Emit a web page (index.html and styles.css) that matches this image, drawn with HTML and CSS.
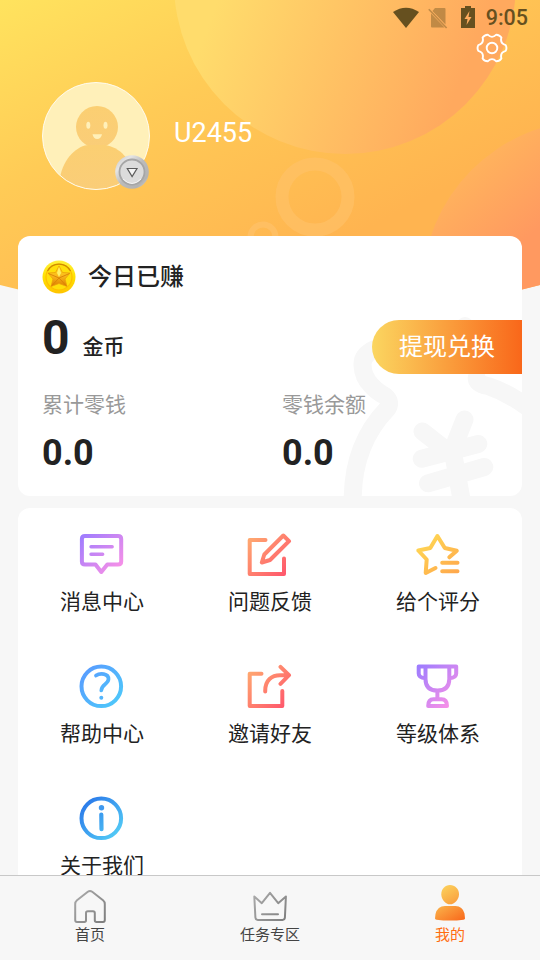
FILE: index.html
```
<!DOCTYPE html>
<html lang="zh-CN">
<head>
<meta charset="utf-8">
<title>我的</title>
<link rel="stylesheet" href="styles.css">
</head>
<body>
<div class="app">
  <svg class="backdrop" viewBox="0 0 540 320" aria-hidden="true">
    <defs>
      <linearGradient id="sky" gradientUnits="userSpaceOnUse" x1="0" y1="0" x2="170" y2="330"><stop offset="0" stop-color="#ffe35e"/><stop offset=".45" stop-color="#ffcb56"/><stop offset="1" stop-color="#ffb450"/></linearGradient>
      <linearGradient id="ball" gradientUnits="userSpaceOnUse" x1="210" y1="20" x2="450" y2="110"><stop offset="0" stop-color="#ffdc6c"/><stop offset=".5" stop-color="#ffc364"/><stop offset="1" stop-color="#ffa95e"/></linearGradient>
      <linearGradient id="ball2" gradientUnits="userSpaceOnUse" x1="465" y1="170" x2="525" y2="240"><stop offset="0" stop-color="#ffb35d"/><stop offset="1" stop-color="#ff9960"/></linearGradient>
      <clipPath id="hill"><path d="M0 0H540V285Q270 355 0 285Z"/></clipPath>
    </defs>
    <g clip-path="url(#hill)">
      <rect width="540" height="320" fill="url(#sky)"/>
      <circle cx="345" cy="-17" r="171" fill="url(#ball)"/>
      <circle cx="592" cy="290" r="170" fill="url(#ball2)"/>
      <circle cx="315" cy="197" r="33" fill="none" stroke="#ffc269" stroke-opacity=".65" stroke-width="13"/>
      <circle cx="263" cy="237" r="12.500" fill="none" stroke="#ffc269" stroke-opacity=".7" stroke-width="6"/>
    </g>
  </svg>

  <div class="status">
    <svg class="wifi" viewBox="0 0 26 22"><path d="M0 5Q13-3.500 26 5L13 21Z"/></svg>
    <svg class="sim" viewBox="0 0 20 22"><path d="M7 1H16.500Q17.500 1 17.500 2V17.500L4.500 4ZM3 6.500L16.500 20.500H4Q3 20.500 3 19.500Z"/><path d="M.8 2.200L18.600 21" fill="none" stroke="#66501f" stroke-width="1.600"/></svg>
    <svg class="battery" viewBox="0 0 14 22"><path fill-rule="evenodd" d="M4 0H10V2H14V22H0V2H4ZM8.500 5L3.500 13H6.500L5.500 19L10.500 11H7.500Z"/></svg>
    <span class="time">9:05</span>
  </div>

  <header class="profile">
    <svg class="gear" viewBox="-16 -16 32 32"><path d="M13.700-2.900Q15.200 0 13.700 2.900Q7.800 4.500 9.400 10.400Q7.600 13.200 4.300 13.300Q0 9-4.300 13.300Q-7.600 13.200-9.400 10.400Q-7.800 4.500-13.700 2.900Q-15.200 0-13.700-2.900Q-7.800-4.500-9.400-10.400Q-7.600-13.200-4.300-13.300Q0-9 4.300-13.300Q7.600-13.200 9.400-10.400Q7.800-4.500 13.700-2.900Z"/><circle r="5.300"/></svg>
    <div class="avatar">
      <svg viewBox="0 0 108 108">
        <defs><clipPath id="face"><circle cx="54" cy="54" r="53.500"/></clipPath>
        <linearGradient id="skin" x1="0" y1="0" x2="0" y2="1"><stop offset="0" stop-color="#fbcf72"/><stop offset="1" stop-color="#facd78"/></linearGradient></defs>
        <circle cx="54" cy="54" r="53.500" fill="#fff0b9"/>
        <g clip-path="url(#face)" fill="url(#skin)"><circle cx="55" cy="45" r="21"/><path d="M18 96C21 76 36 63 47 63H63C77 65 90 77 92 96V108H18Z"/></g>
        <g fill="#fff0b9"><ellipse cx="46.300" cy="43.300" rx="2" ry="3.500"/><ellipse cx="63.500" cy="43.300" rx="2" ry="3.500"/><path d="M50.500 52.300H60Q59 57 55.200 57T50.500 52.300Z"/></g>
        <circle cx="54" cy="54" r="53.500" fill="none" stroke="#fffbed"/>
      </svg>
      <svg class="medal" viewBox="0 0 34 34">
        <defs><linearGradient id="silver" x1="0" y1="0" x2="1" y2="1"><stop offset="0" stop-color="#c2c2c2"/><stop offset=".25" stop-color="#e5e5e5"/><stop offset=".5" stop-color="#bbb"/><stop offset=".8" stop-color="#b3b3b3"/><stop offset="1" stop-color="#ddd"/></linearGradient></defs>
        <circle cx="17" cy="17" r="16.800" fill="url(#silver)"/><circle cx="17" cy="17" r="12.500" fill="#dcdcdc" stroke="#a6a6a6" stroke-width="1.800"/><path d="M8 24Q17 33 26 24" fill="none" stroke="#f5f5f5" stroke-width="1"/>
        <path d="M12.300 13.500H22L17.100 21.500Z" fill="#f4f4f4" stroke="#5b5b5b" stroke-width="1.200"/>
      </svg>
    </div>
    <h1 class="name">U2455</h1>
  </header>

  <section class="card wallet">
    <svg class="bag" viewBox="0 0 180 180" aria-hidden="true"><path d="M33 33Q20 39 20.500 49Q21 61 29 69Q34 75 43 80Q50 86 45 93C23 116 10.700 145 10.700 184M134.700 62Q135 68 146 70Q167 77 188 93M123 10V20M80.500 115.500L108 137M122.500 103.500L110.500 134L120 186M79.700 142.700L136.300 128M86 167.300L142.300 151"/></svg>
    <div class="wallet-title">
      <svg class="coin" viewBox="0 0 34 34">
        <defs><linearGradient id="gold" x1="0" y1="0" x2="0" y2="1"><stop offset="0" stop-color="#fff13c"/><stop offset=".5" stop-color="#ffe000"/><stop offset="1" stop-color="#ffc400"/></linearGradient><linearGradient id="star" x1="0" y1="0" x2="0" y2="1"><stop offset="0" stop-color="#ffe31c"/><stop offset=".5" stop-color="#f9b61b"/><stop offset="1" stop-color="#dc7d00"/></linearGradient></defs>
        <circle cx="17" cy="17" r="16.500" fill="url(#gold)"/><circle cx="17" cy="17" r="13" fill="#ffdf0a" stroke="#ffbd00" stroke-width="1.200"/><path d="M5.500 11A13 13 0 0 1 28.500 11" fill="none" stroke="#cf8c00" stroke-width="1.200"/>
        <path d="M17 6L20.500 12.500L28 13L23 19L25 26.500L17 23.500L9 26.500L11 19L6 13L13.500 12.500Z" fill="url(#star)" stroke="#eda00a" stroke-width=".8" stroke-linejoin="round"/><path d="M6.500 13.500L17 18L27.500 13.500M17 18L9.500 26M17 18L24.500 26" fill="none" stroke="#d98107" stroke-width=".9"/><path d="M17 7L19 13L17 17L15 13Z" fill="#fff06a"/>
      </svg>
      <h2>今日已赚</h2>
    </div>
    <div class="today"><span class="amount">0</span><span class="unit">金币</span><a class="exchange">提现兑换</a></div>
    <dl class="totals">
      <div><dt>累计零钱</dt><dd>0.0</dd></div>
      <div><dt>零钱余额</dt><dd>0.0</dd></div>
    </dl>
  </section>

  <section class="card menu">
    <svg class="paints" width="0" height="0" aria-hidden="true"><defs>
      <linearGradient id="violet" gradientUnits="userSpaceOnUse" x1="3" y1="3" x2="40" y2="42"><stop offset="0" stop-color="#9c7cff"/><stop offset="1" stop-color="#fb91e6"/></linearGradient>
      <linearGradient id="coral" gradientUnits="userSpaceOnUse" x1="3" y1="7" x2="40" y2="43"><stop offset="0" stop-color="#ffa970"/><stop offset="1" stop-color="#ff576c"/></linearGradient>
      <linearGradient id="amber" gradientUnits="userSpaceOnUse" x1="8" y1="3" x2="40" y2="43"><stop offset="0" stop-color="#ffdb54"/><stop offset="1" stop-color="#ffa94c"/></linearGradient>
      <linearGradient id="azure" gradientUnits="userSpaceOnUse" x1="5" y1="5" x2="42" y2="42"><stop offset="0" stop-color="#599bff"/><stop offset="1" stop-color="#4dcafa"/></linearGradient>
      <linearGradient id="ocean" gradientUnits="userSpaceOnUse" x1="8" y1="8" x2="40" y2="40"><stop offset="0" stop-color="#2c7cea"/><stop offset="1" stop-color="#53cbf6"/></linearGradient>
    </defs></svg>
    <a class="item"><svg viewBox="0 0 48 48" stroke="url(#violet)"><path d="M7 5H40Q43.200 5 43.200 8V30.500Q43.200 33.500 40 33.500H29.300L23.300 41L17.500 33.500H7Q3.900 33.500 3.900 30.500V8Q3.900 5 7 5Z"/><path d="M13 15.700H34.200M13 23.300H24.700" stroke-width="3.400"/></svg><span>消息中心</span></a>
    <a class="item"><svg viewBox="0 0 48 48" stroke="url(#coral)"><path d="M19.500 9H3.700V43H38V27.500M15.800 31.500L18.300 23.500L37.300 4.500L43 10.200L24 29Z"/></svg><span>问题反馈</span></a>
    <a class="item"><svg viewBox="0 0 48 48" stroke="url(#amber)"><path d="M35.300 26.300L42.800 19.700L30.800 17L23.400 5L16.300 17L4.300 19.500L12.700 28.500L11.700 42L21.500 37M28.200 31.700H43.500M28.200 40.300H43.500"/></svg><span>给个评分</span></a>
    <a class="item"><svg viewBox="0 0 48 48" stroke="url(#azure)"><circle cx="23.300" cy="23.300" r="19.800"/><path d="M18 12.600C22 9.700 30.700 10.200 30.500 16.200C30.200 21.500 23.400 21 23.300 27.500" stroke-width="3.700"/><circle cx="23.300" cy="34.700" r="2" fill="#53b5fc" stroke="none"/></svg><span>帮助中心</span></a>
    <a class="item"><svg viewBox="0 0 48 48" stroke="url(#coral)"><path d="M15.500 10.700H3.700V43H36.300V28M19.200 28.400C19 17 26 12.200 34 12.200H42.500M34.500 3.800L43 12.200L34.500 20.800"/></svg><span>邀请好友</span></a>
    <a class="item"><svg viewBox="0 0 48 48" stroke="url(#violet)"><path d="M4.700 3.600H42.200V10.500Q42.200 14.700 35.300 15.300M4.700 3.600V10.500Q4.700 14.700 11.500 15.300M11.500 3.600V16Q11.500 27.600 23.400 27.600T35.300 16V3.600M23.400 28V36M14.200 43Q14.200 36.300 19.500 36.300H27.500Q33 36.300 33 43Z"/></svg><span>等级体系</span></a>
    <a class="item"><svg viewBox="0 0 48 48" stroke="url(#ocean)"><circle cx="23.300" cy="23.300" r="19.800"/><circle cx="23.500" cy="12.700" r="2.700" fill="#4099ef" stroke="none"/><path d="M23.300 19.500L23.500 34.200" stroke-width="4.200"/></svg><span>关于我们</span></a>
  </section>

  <nav class="tabs">
    <svg class="paints" width="0" height="0" aria-hidden="true"><defs>
      <linearGradient id="steel" gradientUnits="userSpaceOnUse" x1="2" y1="6" x2="34" y2="34"><stop offset="0" stop-color="#aaa"/><stop offset="1" stop-color="#7d7d7d"/></linearGradient>
      <linearGradient id="flame" gradientUnits="userSpaceOnUse" x1="8" y1="-2" x2="29" y2="33"><stop offset="0" stop-color="#fcd45e"/><stop offset=".45" stop-color="#faaa45"/><stop offset="1" stop-color="#f96b1d"/></linearGradient>
    </defs></svg>
    <a class="tab"><svg viewBox="0 -6 36 42"><path stroke="url(#steel)" d="M5 34Q3.200 34 3.200 32V16Q3.200 13.800 5 12.300L15.800 3.800Q18 2.100 20.200 3.800L31 12.300Q32.800 13.800 32.800 16V32Q32.800 34 31 34H24.500Q22.800 34 22.800 32.300V25Q22.800 23.300 21 23.300H15.800Q14 23.300 14 25V32.300Q14 34 12.300 34Z"/></svg><span>首页</span></a>
    <a class="tab"><svg viewBox="0 -6 36 42"><path stroke="url(#steel)" d="M2.300 8.500L9.800 15.200L18 4.800L26.200 15.200L33.900 8.500L32.900 29.500Q32.700 31.900 30.500 31.900H5.800Q3.600 31.900 3.400 29.500ZM10 26.200H26"/></svg><span>任务专区</span></a>
    <a class="tab active"><svg viewBox="0 -6 36 42"><g fill="url(#flame)"><path d="M18 -3C23-3 27 1 27 6.200C27 11.500 22.500 16.300 18 16.300S9.300 11.500 9.300 6.200C9.300 1 13-3 18-3Z"/><path d="M13 18H23.500Q30.500 18 32.500 25.500L33 30.500Q33 31.500 31.500 31.700Q18 33.500 4.500 31.700Q3 31.500 3 30.500L3.500 26Q5.500 18 13 18Z"/></g></svg><span>我的</span></a>
  </nav>
</div>
</body>
</html>
```
FILE: styles.css
```
* { box-sizing: border-box; margin: 0; padding: 0; }

body {
  background: #f7f7f7;
  color: #222;
  font-family: Roboto, "Noto Sans CJK SC", sans-serif;
  overflow: hidden;
}

svg { display: block; flex: none; }

.app {
  position: relative;
  display: flex;
  flex-direction: column;
  height: 960px;
  width: 540px;
  overflow: hidden;
}

.backdrop { position: absolute; left: 0; top: 0; width: 540px; height: 320px; }

.status {
  position: relative;
  display: flex;
  justify-content: flex-end;
  align-items: center;
  height: 36px;
  padding-right: 12px;
  color: #66501f;
  fill: #66501f;
}
.wifi { width: 26px; height: 22px; margin-right: 9px; }
.sim { width: 20px; height: 22px; margin-right: 13px; opacity: .4; }
.battery { width: 14px; height: 22px; margin: -2px 11px 0 0; }
.time { font-size: 21.5px; font-weight: 500; line-height: 36px; }

.profile {
  position: relative;
  display: flex;
  align-items: flex-start;
  height: 200px;
  padding: 46px 42px 0;
}
.gear {
  position: absolute;
  right: 32px;
  top: -4px;
  width: 32px;
  height: 32px;
  fill: none;
  stroke: #fff;
  stroke-width: 1.9;
  stroke-linejoin: round;
}
.avatar { position: relative; width: 108px; height: 108px; }
.medal { position: absolute; right: 1px; bottom: 1px; width: 34px; height: 34px; }
.name { margin: 34px 0 0 24px; color: #fff; font-size: 27px; font-weight: 400; line-height: 34px; }

.card { background: #fff; border-radius: 12px; margin: 0 18px; flex: none; }

.wallet { position: relative; height: 260px; padding: 24px 0 0 24px; overflow: hidden; }
.bag {
  position: absolute;
  right: 0;
  bottom: 0;
  width: 180px;
  height: 180px;
  fill: none;
  stroke: #f7f7f7;
  stroke-width: 18;
  stroke-linecap: round;
  stroke-linejoin: round;
}
.wallet-title { display: flex; align-items: center; gap: 12px; height: 34px; }
.coin { width: 34px; height: 34px; }
.wallet-title h2 { font-size: 24px; font-weight: 500; line-height: 34px; }
.today { position: relative; display: flex; align-items: baseline; height: 54px; margin-top: 26px; line-height: 54px; }
.amount { font-size: 48px; font-weight: 700; line-height: 36px; }
.unit { margin-left: 13px; font-size: 21px; font-weight: 500; line-height: 36px; }
.exchange {
  align-self: flex-start;
  width: 150px;
  height: 54px;
  margin-left: auto;
  border-radius: 27px 0 0 27px;
  background: linear-gradient(90deg, #fbd660, #f9671a);
  color: #fff;
  font-size: 24px;
  text-align: center;
}
.totals { position: relative; display: grid; grid-template-columns: 240px 240px; margin-top: 15px; }
.totals dt { color: #999; font-size: 21px; line-height: 32px; }
.totals dd { margin-top: 11px; font-size: 36px; font-weight: 700; line-height: 42px; }

.menu { display: grid; grid-template-columns: repeat(3, 168px); grid-auto-rows: 132px; height: 420px; margin-top: 12px; }
.paints { position: absolute; }
.item { display: flex; flex-direction: column; align-items: center; padding-top: 23px; font-size: 21px; line-height: 30px; }
.item svg { width: 48px; height: 48px; fill: none; stroke-width: 4; stroke-linecap: round; stroke-linejoin: round; }
.item span { margin-top: 8px; }

.tabs {
  position: absolute;
  left: 0;
  right: 0;
  bottom: 0;
  display: grid;
  grid-template-columns: repeat(3, 1fr);
  height: 85px;
  border-top: 1px solid #c8c8c8;
  background: #f7f7f7;
  color: #444;
}
.tab { display: flex; flex-direction: column; align-items: center; padding-top: 6px; font-size: 15px; line-height: 22px; }
.tab svg { width: 36px; height: 42px; fill: none; stroke-width: 2; stroke-linecap: round; stroke-linejoin: round; }
.tab.active { color: #ff6d10; }
```
